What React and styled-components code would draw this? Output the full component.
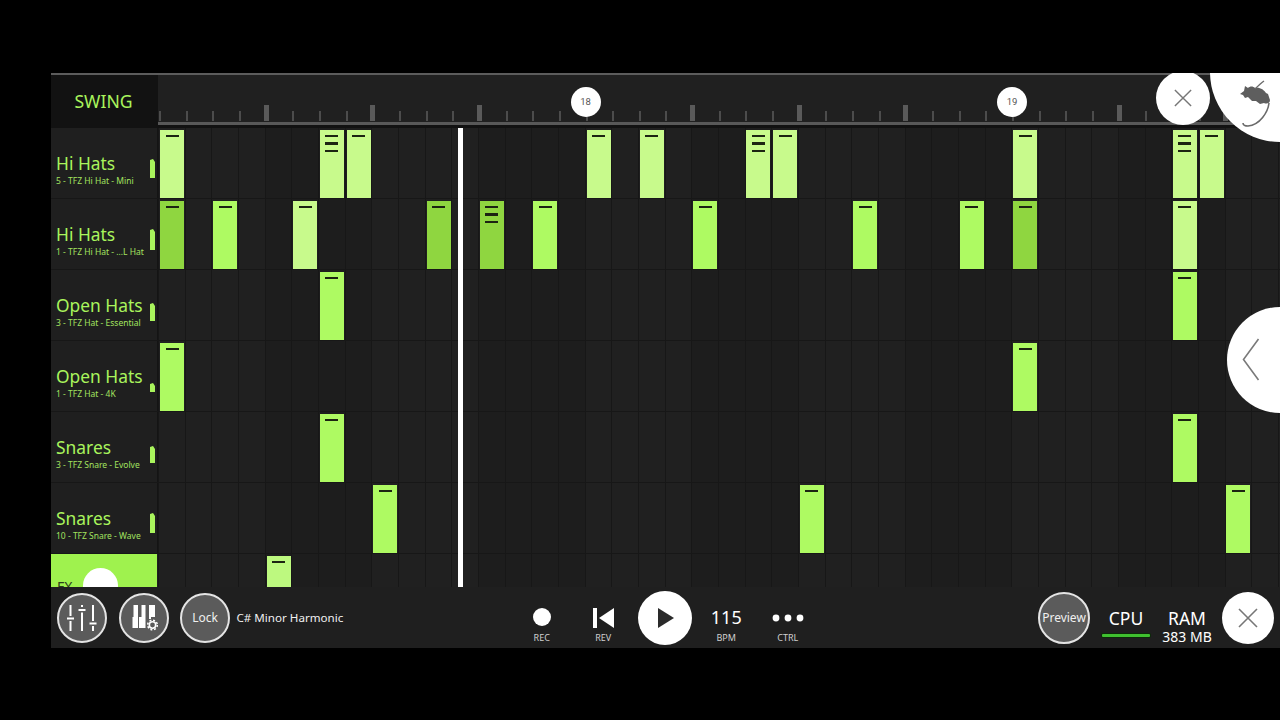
import styled, { createGlobalStyle } from "styled-components";

const CELL = 26.67;
const GREEN = "#a9f45c";
const LIGHT = "#c8fa8c";
const MID = "#aefa62";
const DARK = "#8fd640";

const GlobalStyle = createGlobalStyle`
  html, body {
    margin: 0;
    padding: 0;
    background: #000;
    font-family: "Noto Sans", "Open Sans", sans-serif;
  }
`;

const Frame = styled.div`
  position: relative;
  width: 1229px;
  height: 575px;
  margin: 73px 0 0 51px;
  overflow: hidden;
  background: #1f1f1f;
  display: flex;
  flex-direction: column;
`;

const TopLine = styled.div`
  height: 2px;
  flex: none;
  background: #5c5c5c;
`;

const Header = styled.div`
  display: flex;
  height: 53px;
  flex: none;
`;

const SwingLabel = styled.div`
  width: 107px;
  flex: none;
  box-sizing: border-box;
  padding-right: 2px;
  background: #121212;
  color: ${GREEN};
  font-size: 17.6px;
  line-height: 53px;
  text-align: center;
`;

const Ruler = styled.div`
  flex: 1;
  background: #202020;
  display: grid;
  grid-template-columns: repeat(43, ${CELL}px);
  align-items: end;
  height: 53px;
  box-sizing: border-box;
  padding: 0 0 5px 1px;
  box-shadow: inset 0 -2px 0 #111, inset 0 -5px 0 #585858;
  border-bottom: 1px solid #111;
  margin-bottom: -1px;
`;

const TickSlot = styled.div`
  position: relative;
  height: 16px;
  display: flex;
  align-items: flex-end;
`;

const Tick = styled.div`
  width: ${(p) => (p.$big ? 5 : 2)}px;
  height: ${(p) => (p.$big ? 16 : 10)}px;
  margin-left: ${(p) => (p.$big ? -2 : 0)}px;
  margin-bottom: 1px;
  background: ${(p) => (p.$big ? "#5a5a5a" : "#4c4c4c")};
`;

const BarMarker = styled.div`
  position: absolute;
  left: -15px;
  top: -19px;
  width: 30px;
  height: 30px;
  border-radius: 50%;
  background: #fff;
  color: #555;
  font-size: 9.5px;
  line-height: 30px;
  text-align: center;
  font-family: "Roboto", sans-serif;
`;

const Body = styled.div`
  position: relative;
  flex: none;
  height: 459px;
  overflow: hidden;
`;

const Row = styled.div`
  display: flex;
  height: 71px;
  box-sizing: border-box;
  border-bottom: 1px solid #171717;
`;

const Label = styled.div`
  position: relative;
  width: 107px;
  flex: none;
  box-sizing: border-box;
  padding: 23px 0 0 5px;
  background: #1f1f1f;
  border-right: 1px solid #141414;
`;

const Name = styled.div`
  color: ${GREEN};
  font-size: 17.4px;
  line-height: 24px;
  white-space: nowrap;
`;

const Sub = styled.div`
  color: #a3e35f;
  font-size: 8.5px;
  line-height: 10px;
  margin-top: 1px;
  white-space: nowrap;
`;

const Meter = styled.div`
  position: absolute;
  left: 99px;
  width: 5px;
  background: ${GREEN};
  clip-path: polygon(0 1px, 3px 0, 100% 3px, 100% 100%, 0 100%);
`;

const Lane = styled.div`
  flex: 1;
  display: grid;
  grid-template-columns: repeat(43, ${CELL}px);
  grid-template-rows: 1fr;
  background:
    repeating-linear-gradient(90deg, #171717 0 1px, transparent 1px ${CELL}px),
    repeating-linear-gradient(90deg, #202020 0 ${CELL * 4}px, #1d1d1d ${CELL * 4}px ${CELL * 8}px);
  padding-left: 0.5px;
`;

const Note = styled.div`
  grid-row: 1;
  grid-column: ${(p) => p.$col + 1};
  width: 24px;
  height: 68px;
  margin: 2px 0 0 1.5px;
  box-sizing: border-box;
  background: ${(p) => p.$color};
  display: flex;
  flex-direction: column;
  align-items: center;
  padding-top: 4.5px;
  gap: 5px;
  i {
    display: block;
    width: 13px;
    height: 2.5px;
    background: #1c2412;
  }
`;

const FxLabel = styled.div`
  position: relative;
  width: 106px;
  flex: none;
  background: #9ff24e;
  overflow: hidden;
  span {
    position: absolute;
    left: 6px;
    top: 25px;
    font-size: 14px;
    line-height: 16px;
    color: #2c3d1a;
  }
  b {
    position: absolute;
    left: 32px;
    top: 14px;
    width: 35px;
    height: 35px;
    border-radius: 50%;
    background: #fff;
  }
`;

const Playhead = styled.div`
  position: absolute;
  left: 407px;
  top: 0;
  bottom: 0;
  width: 4.5px;
  background: #fff;
`;

const Bottom = styled.div`
  flex: 1;
  background: #1f1f1f;
  display: grid;
  grid-template-columns: 460px auto 1fr;
  align-items: center;
  position: relative;
  z-index: 2;
`;

const LeftGroup = styled.div`
  display: flex;
  align-items: center;
  gap: 11.5px;
  padding-left: 6px;
`;

const RoundButton = styled.div`
  width: 50px;
  height: 50px;
  box-sizing: border-box;
  border-radius: 50%;
  border: 2px solid #e4e4e4;
  background: #5b5b5b;
  color: #f0f0f0;
  font-size: ${(p) => p.$size || 12}px;
  display: flex;
  align-items: center;
  justify-content: center;
  flex: none;
`;

const Scale = styled.div`
  color: #f0f0f0;
  font-size: 11.6px;
  margin-left: -5px;
  white-space: nowrap;
`;

const Transport = styled.div`
  display: flex;
`;

const TransportItem = styled.div`
  width: 61.5px;
  height: 60px;
  position: relative;
  display: flex;
  justify-content: center;
  align-items: center;
  color: #fff;
`;

const TransportCaption = styled.div`
  position: absolute;
  left: 0;
  right: 0;
  top: 44px;
  text-align: center;
  font-size: 9px;
  line-height: 12px;
  color: #d0d0d0;
`;

const RecDot = styled.div`
  width: 18px;
  height: 18px;
  border-radius: 50%;
  background: #fff;
  margin-top: -1px;
`;

const PlayCircle = styled.div`
  width: 54px;
  height: 54px;
  border-radius: 50%;
  background: #fff;
  display: flex;
  align-items: center;
  justify-content: center;
`;

const Bpm = styled.div`
  font-size: 18px;
  line-height: 24px;
  margin-top: -1px;
`;

const RightGroup = styled.div`
  display: flex;
  align-items: center;
  justify-content: flex-end;
  padding-right: 6px;
`;

const PreviewButton = styled(RoundButton)`
  width: 52px;
  height: 52px;
  font-size: 12px;
`;

const Stat = styled.div`
  width: ${(p) => p.$width}px;
  height: 60px;
  color: #fff;
  text-align: center;
  display: flex;
  flex-direction: column;
  align-items: center;
  font-size: 17.5px;
  line-height: 20px;
  padding-top: 20px;
  box-sizing: border-box;
`;

const CpuBar = styled.div`
  width: 48px;
  height: 3px;
  margin-top: 6px;
  background: #3fc02f;
  box-shadow: 0 0 0 1px #0d2a0a;
  border-radius: 1px;
`;

const StatSmall = styled.div`
  font-size: 14px;
  line-height: 14px;
  margin-top: 2px;
  white-space: nowrap;
`;

const WhiteCircle = styled.div`
  width: ${(p) => p.$size}px;
  height: ${(p) => p.$size}px;
  border-radius: 50%;
  background: #fff;
  display: flex;
  align-items: center;
  justify-content: center;
  flex: none;
`;

const CloseCircle = styled(WhiteCircle)`
  margin-left: 10px;
`;

const FloatClose = styled(WhiteCircle)`
  position: absolute;
  left: 1105px;
  top: -2px;
  z-index: 3;
`;

const LogoCircle = styled.div`
  position: absolute;
  left: 1159px;
  top: -71px;
  width: 140px;
  height: 140px;
  border-radius: 50%;
  background: #fff;
  z-index: 3;
  svg {
    position: absolute;
    left: 30px;
    top: 78px;
  }
`;

const SideHandle = styled.div`
  position: absolute;
  left: 1176px;
  top: 234px;
  width: 106px;
  height: 106px;
  border-radius: 50%;
  background: #fff;
  z-index: 3;
  svg {
    position: absolute;
    left: 15px;
    top: 31px;
  }
`;

const CrossIcon = ({ size, color = "#777" }) => (
  <svg width={size} height={size} viewBox="0 0 20 20" fill="none">
    <path d="M1 1 L19 19 M19 1 L1 19" stroke={color} strokeWidth="1.6" />
  </svg>
);

const MixerIcon = () => (
  <svg width="34" height="30" viewBox="0 0 34 30" fill="#fff">
    <rect x="4.5" y="2" width="2" height="11" />
    <rect x="2" y="14.5" width="7" height="2" />
    <rect x="4.5" y="18" width="2" height="10" />
    <rect x="16" y="2" width="2" height="2" />
    <rect x="13.5" y="6" width="7" height="2" />
    <rect x="16" y="9.5" width="2" height="18.5" />
    <rect x="27" y="2" width="2" height="16" />
    <rect x="24.5" y="19.5" width="7" height="2" />
    <rect x="27" y="23" width="2" height="5" />
  </svg>
);

const KeysIcon = () => (
  <svg width="34" height="30" viewBox="0 0 34 30" fill="#fff">
    <path d="M6.5 2h4.5v23h-5.5v-11h1z" />
    <path d="M14.5 2h4v23h-6.5v-11h2.5z" />
    <path d="M22 2h6v12h-4v2h-2z" />
    <g transform="translate(25.5 22)">
      <circle r="3.2" fill="none" stroke="#fff" strokeWidth="1.6" />
      <circle r="4.8" fill="none" stroke="#fff" strokeWidth="1.5" strokeDasharray="2 1.77" />
    </g>
  </svg>
);

const PrevIcon = () => (
  <svg width="21" height="20" viewBox="0 0 21 20" fill="#fff">
    <rect x="0" y="0" width="4" height="20" />
    <path d="M21 0 V20 L6 10 Z" />
  </svg>
);

const PlayIcon = () => (
  <svg width="16" height="20" viewBox="0 0 16 20" style={{ marginLeft: 3 }}>
    <path d="M0 0 L16 10 L0 20 Z" fill="#2a2a2a" />
  </svg>
);

const DotsIcon = () => (
  <svg width="32" height="8" viewBox="0 0 32 8" fill="#fff">
    <circle cx="4" cy="4" r="3.4" />
    <circle cx="16" cy="4" r="3.4" />
    <circle cx="28" cy="4" r="3.4" />
  </svg>
);

const FruitLogo = () => (
  <svg width="32" height="48" viewBox="0 0 32 48" fill="none">
    <path
      d="M0 14 L4 11 L5 6 L8 8 C10 6 13 6 15 8 C20 7 24 10 26 13 L28 14 L30 20 C30 24 26 24 24 23 L20 24 L16 21 L12 21 L8 17 L5 18 L3 15 Z"
      fill="#5e5e5e"
    />
    <path d="M15 9 C18 6 21 3 24 1" stroke="#6a6a6a" strokeWidth="1.4" />
    <path d="M29 23 C28 32 20 45 8 46 C5 46 3 45 3 43" stroke="#6a6a6a" strokeWidth="1.6" />
  </svg>
);

const ChevronIcon = () => (
  <svg width="18" height="44" viewBox="0 0 18 44" fill="none">
    <path d="M16.5 1 L1.5 21.5 L16.5 42" stroke="#7a7a7a" strokeWidth="1.6" />
  </svg>
);

const d3 = { lines: 3 };

const rows = [
  {
    name: "Hi Hats",
    sub: "5 - TFZ Hi Hat - Mini",
    meter: [31, 19],
    notes: [
      [0, LIGHT], [6, LIGHT, d3], [7, LIGHT], [16, LIGHT], [18, LIGHT],
      [22, LIGHT, d3], [23, LIGHT], [32, LIGHT], [38, LIGHT, d3], [39, LIGHT],
    ],
  },
  {
    name: "Hi Hats",
    sub: "1 - TFZ Hi Hat - ...L Hat",
    meter: [30, 21],
    notes: [
      [0, DARK], [2, MID], [5, LIGHT], [10, DARK], [12, DARK, d3], [14, MID],
      [20, MID], [26, MID], [30, MID], [32, DARK], [38, LIGHT],
    ],
  },
  {
    name: "Open Hats",
    sub: "3 - TFZ Hat - Essential",
    meter: [33, 18],
    notes: [[6, MID], [38, MID]],
  },
  {
    name: "Open Hats",
    sub: "1 - TFZ Hat - 4K",
    meter: [42, 9],
    notes: [[0, MID], [32, MID]],
  },
  {
    name: "Snares",
    sub: "3 - TFZ Snare - Evolve",
    meter: [34, 17],
    notes: [[6, MID], [38, MID]],
  },
  {
    name: "Snares",
    sub: "10 - TFZ Snare - Wave",
    meter: [30, 20],
    notes: [[8, MID], [24, MID], [40, MID]],
  },
];

const bars = { 16: "18", 32: "19" };

function NoteBlock({ col, color, opts }) {
  const lines = opts?.lines || 1;
  return (
    <Note $col={col} $color={color}>
      {Array.from({ length: lines }).map((_, i) => (
        <i key={i} />
      ))}
    </Note>
  );
}

function App() {
  return (
    <>
      <GlobalStyle />
      <Frame>
        <TopLine />
        <Header>
          <SwingLabel>SWING</SwingLabel>
          <Ruler>
            {Array.from({ length: 43 }).map((_, i) => (
              <TickSlot key={i}>
                <Tick $big={i % 4 === 0 && i % 16 !== 0} />
                {bars[i] && <BarMarker>{bars[i]}</BarMarker>}
              </TickSlot>
            ))}
          </Ruler>
        </Header>
        <Body>
          {rows.map((row, r) => (
            <Row key={r}>
              <Label>
                <Name>{row.name}</Name>
                <Sub>{row.sub}</Sub>
                <Meter style={{ top: row.meter[0], height: row.meter[1] }} />
              </Label>
              <Lane>
                {row.notes.map(([col, color, opts]) => (
                  <NoteBlock key={col} col={col} color={color} opts={opts} />
                ))}
              </Lane>
            </Row>
          ))}
          <Row>
            <FxLabel>
              <span>FX</span>
              <b />
            </FxLabel>
            <Lane style={{ marginLeft: 1 }}>
              <NoteBlock col={4} color="#bdf97f" />
            </Lane>
          </Row>
          <Playhead />
        </Body>
        <Bottom>
          <LeftGroup>
            <RoundButton>
              <MixerIcon />
            </RoundButton>
            <RoundButton>
              <KeysIcon />
            </RoundButton>
            <RoundButton>Lock</RoundButton>
            <Scale>C# Minor Harmonic</Scale>
          </LeftGroup>
          <Transport>
            <TransportItem>
              <RecDot />
              <TransportCaption>REC</TransportCaption>
            </TransportItem>
            <TransportItem>
              <PrevIcon />
              <TransportCaption>REV</TransportCaption>
            </TransportItem>
            <TransportItem>
              <PlayCircle>
                <PlayIcon />
              </PlayCircle>
            </TransportItem>
            <TransportItem>
              <Bpm>115</Bpm>
              <TransportCaption>BPM</TransportCaption>
            </TransportItem>
            <TransportItem>
              <DotsIcon />
              <TransportCaption>CTRL</TransportCaption>
            </TransportItem>
          </Transport>
          <RightGroup>
            <PreviewButton>Preview</PreviewButton>
            <Stat $width={72}>
              CPU
              <CpuBar />
            </Stat>
            <Stat $width={50}>
              RAM
              <StatSmall>383 MB</StatSmall>
            </Stat>
            <CloseCircle $size={52}>
              <CrossIcon size={20} />
            </CloseCircle>
          </RightGroup>
        </Bottom>
        <FloatClose $size={54}>
          <CrossIcon size={18} />
        </FloatClose>
        <LogoCircle>
          <FruitLogo />
        </LogoCircle>
        <SideHandle>
          <ChevronIcon />
        </SideHandle>
      </Frame>
    </>
  );
}

export default App;
